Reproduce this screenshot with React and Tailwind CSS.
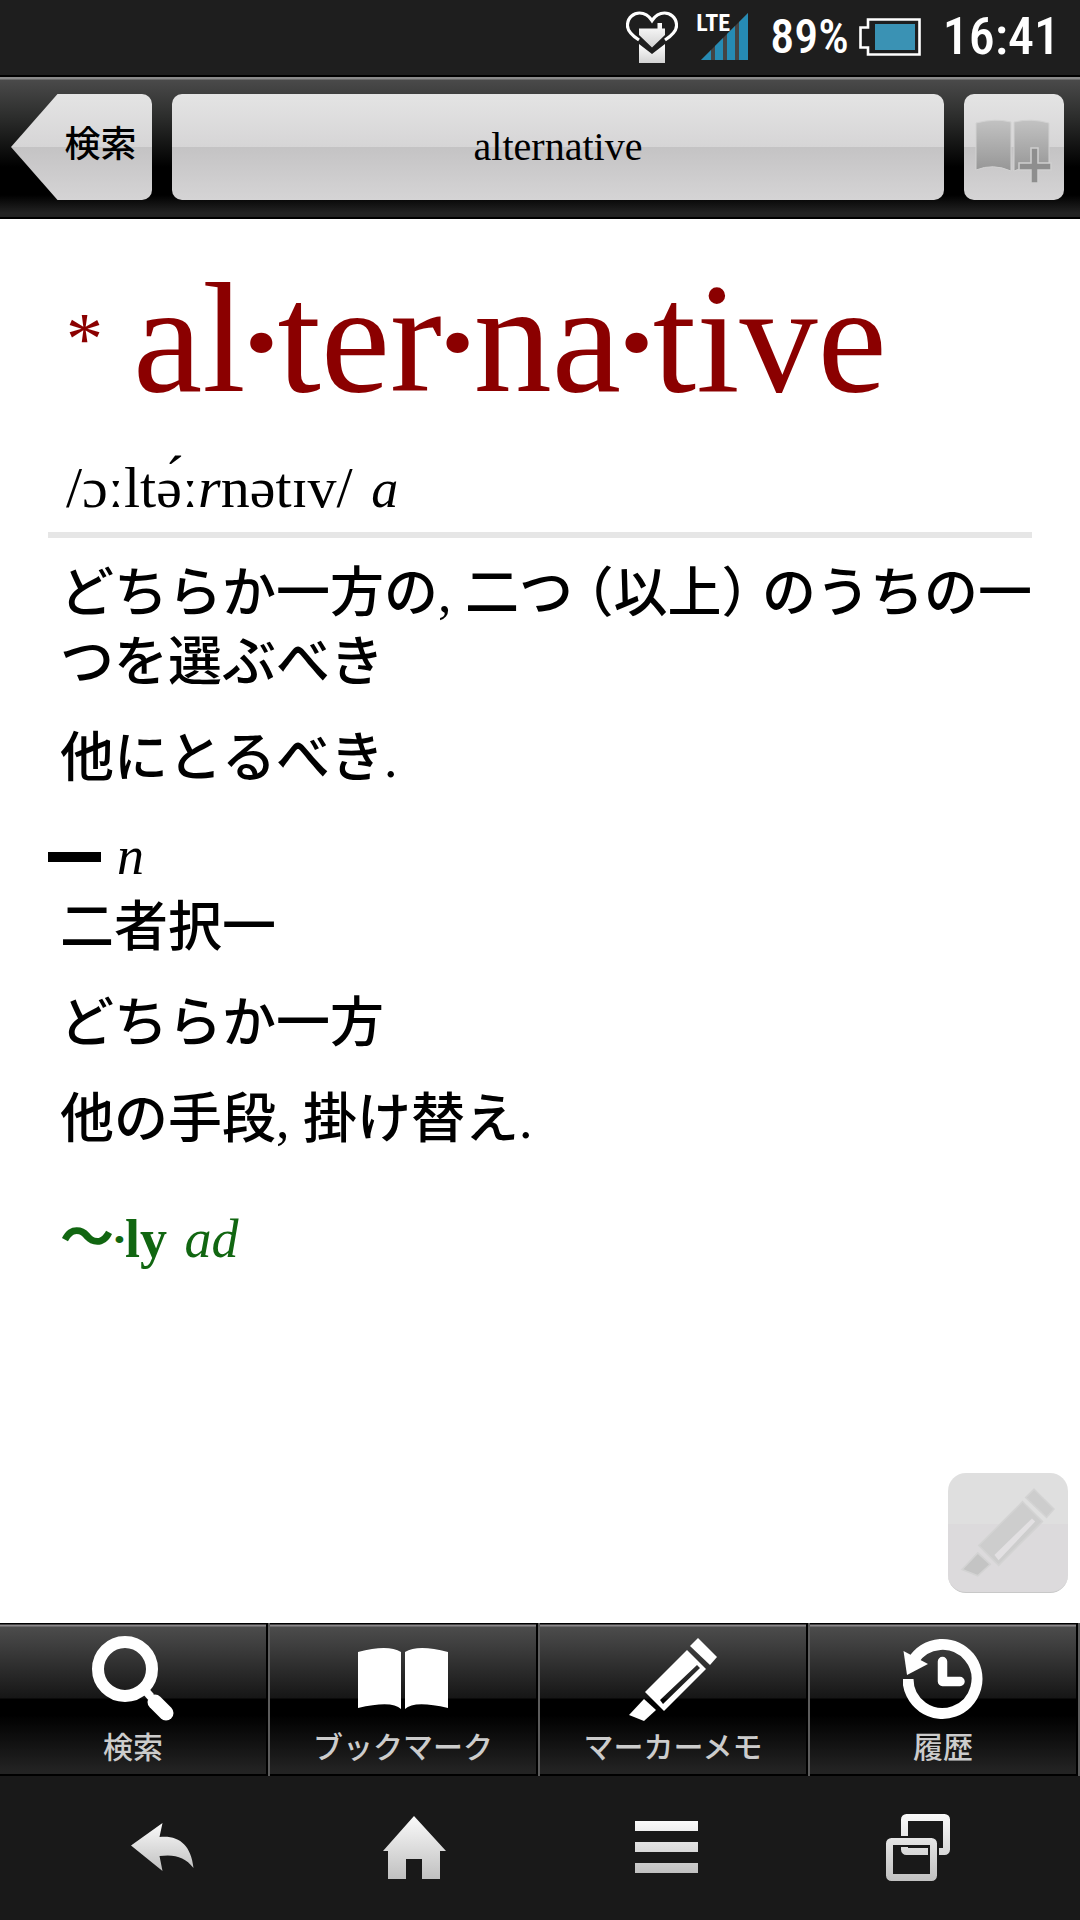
import { useState } from 'react';

const MARKER_CAP = '69,0 88,19 81,27 61,8';
const MARKER_TIP = '15,61 27,72 15,83 0,77';

function HeartIcon() {
  return (
    <svg viewBox="0 0 52 52" className="w-[52px] h-[52px]" aria-hidden="true">
      <defs>
        <linearGradient id="box" x1="0" y1="0" x2="0" y2="1">
          <stop offset="0" stopColor="#fff" />
          <stop offset="1" stopColor="#d2d2d2" />
        </linearGradient>
      </defs>
      <path
        d="M13 29 C4 23 1 18 1.5 13.5 C2 6 8 2 13.5 2 C19 2 23 5 26 9.5 C29 5 33 2 38.5 2 C44 2 50 6 50.5 13.5 C51 18 48 23 39 29"
        fill="none"
        stroke="#fff"
        strokeWidth="3.2"
      />
      <path d="M13 17.5 H31.5 V12 H36 V17.5 H39 V24 L26 36.5 L13 24 Z" fill="url(#box)" />
      <path d="M13 33 L26 43 L39 33 V52 H13 Z" fill="url(#box)" />
    </svg>
  );
}

function SignalIcon() {
  return (
    <svg viewBox="0 0 47 47" className="w-[47px] h-[47px]" aria-hidden="true">
      <path d="M0 47 L47 0 V47 Z" fill="#444" />
      <path d="M0 47 L10 37 V47 Z M14 47 V33 L22 25 V47 Z M26 47 V21 L34 13 V47 Z M38 47 V9 L47 0 V47 Z" fill="#268bb4" />
    </svg>
  );
}

function BatteryIcon() {
  return (
    <svg viewBox="0 0 62 38" className="w-[62px] h-[38px]" aria-hidden="true">
      <path d="M9 1.5 H60.5 V36.5 H9 V29.5 H1.5 V9.5 H9 Z" fill="none" stroke="#fff" strokeWidth="2.6" />
      <rect x="16" y="6" width="40" height="26" fill="#3a92b4" />
    </svg>
  );
}

function BookAddIcon() {
  return (
    <svg viewBox="0 0 78 66" className="w-[78px] h-[66px]" aria-hidden="true">
      <defs>
        <linearGradient id="page" x1="0" y1="0" x2="0" y2="1">
          <stop offset="0" stopColor="#c2c2c2" />
          <stop offset="1" stopColor="#969696" />
        </linearGradient>
      </defs>
      <g fill="url(#page)" stroke="#d2d2d2">
        <path d="M1 5 Q20 0 36 4 V53 Q18 45 1 52 Z" />
        <path d="M39 4 Q56 0 74 5 V52 Q56 45 39 53 Z" />
      </g>
      <path d="M56 30 H63 V45 H76 V52 H63 V65 H56 V52 H44 V45 H56 Z" fill="#8e8e8e" stroke="#cfcfcf" strokeWidth="1.5" />
    </svg>
  );
}

function SearchIcon() {
  return (
    <svg viewBox="0 0 84 86" className="w-[84px] h-[86px]" aria-hidden="true">
      <g fill="none" stroke="#fff">
        <circle cx="34" cy="33" r="27" strokeWidth="12" />
        <path d="M53 53 L60 61" strokeWidth="8" />
        <path d="M64 66 L75 77" strokeWidth="15" strokeLinecap="round" />
      </g>
    </svg>
  );
}

function BookIcon() {
  return (
    <svg viewBox="0 0 90 62" className="w-[90px] h-[62px]" aria-hidden="true">
      <path d="M0 4 Q30 -4 43 4 V61 Q34 52 0 60 Z" fill="#fff" />
      <path d="M47 4 Q60 -4 90 4 V60 Q56 52 47 61 Z" fill="#fff" />
    </svg>
  );
}

function MarkerIcon() {
  return (
    <svg viewBox="0 0 88 83" className="w-[88px] h-[83px]" aria-hidden="true">
      <g fill="#fff">
        <polygon points={MARKER_CAP} />
        <path fillRule="evenodd" d="M58 12 L77 31 L35 73 L16 54 Z M68 27 L71 30 L34 66 L31 62 Z" />
        <polygon points={MARKER_TIP} />
      </g>
    </svg>
  );
}

function MarkerGhostIcon() {
  return (
    <svg viewBox="-2 -2 92 87" className="w-[96px] h-[91px]" aria-hidden="true">
      <g fill="#cdcdcd" stroke="#d3d3d3" strokeWidth="1.5">
        <polygon points={MARKER_CAP} />
        <path d="M58 12 L77 31 L35 73 L16 54 Z" />
        <polygon points={MARKER_TIP} fill="#c4c4c4" />
      </g>
      <polygon points="67,28 70,31 35,68 31,63" fill="#e2e0e2" />
    </svg>
  );
}

function HistoryIcon() {
  return (
    <svg viewBox="0 0 81 82" className="w-[81px] h-[82px]" aria-hidden="true">
      <path d="M5 41 A34.5 34.5 0 1 0 10 23" fill="none" stroke="#fff" strokeWidth="11" />
      <polygon points="0.5,13 25,26 4,37" fill="#fff" />
      <path d="M39.5 23.5 V43.5 H57" fill="none" stroke="#fff" strokeWidth="9.5" strokeLinecap="round" strokeLinejoin="round" />
    </svg>
  );
}

function NavGradient({ id, height }) {
  return (
    <defs>
      <linearGradient id={id} gradientUnits="userSpaceOnUse" x1="0" y1="0" x2="0" y2={height}>
        <stop offset="0" stopColor="#fafafa" />
        <stop offset="1" stopColor="#c0c0c0" />
      </linearGradient>
    </defs>
  );
}

function BackIcon() {
  return (
    <svg viewBox="0 0 63 48" className="w-[63px] h-[48px]" aria-hidden="true">
      <NavGradient id="nav-back" height="48" />
      <path d="M0 22.5 L31.5 0 L28.5 14 C48 12 60 22 62.5 45 C54 34 44 31 28.5 33 L31.5 48 Z" fill="url(#nav-back)" />
    </svg>
  );
}

function HomeIcon() {
  return (
    <svg viewBox="0 0 63 63" className="w-[63px] h-[63px]" aria-hidden="true">
      <NavGradient id="nav-home" height="63" />
      <path d="M31 0 L63 35 H57 V63 H39 V43 H23 V63 H5 V35 H0 Z" fill="url(#nav-home)" />
    </svg>
  );
}

function MenuIcon() {
  return (
    <svg viewBox="0 0 63 52" className="w-[63px] h-[52px]" aria-hidden="true">
      <NavGradient id="nav-menu" height="52" />
      <path d="M0 0 H63 V10 H0 Z M0 21 H63 V31 H0 Z M0 42 H63 V52 H0 Z" fill="url(#nav-menu)" />
    </svg>
  );
}

function RecentsIcon() {
  return (
    <svg viewBox="0 0 64 67" className="w-[64px] h-[67px]" aria-hidden="true">
      <NavGradient id="nav-recents" height="67" />
      <g fill="none" strokeWidth="7">
        <rect x="18.5" y="3.5" width="42" height="34" rx="2" stroke="url(#nav-recents)" />
        <rect x="3.5" y="27.5" width="44" height="36" rx="2" stroke="#191919" strokeWidth="11" />
        <rect x="3.5" y="27.5" width="44" height="36" rx="2" stroke="url(#nav-recents)" />
      </g>
    </svg>
  );
}

const tabs = [
  { id: 'search', label: '検索', icon: SearchIcon },
  { id: 'bookmark', label: 'ブックマーク', icon: BookIcon },
  { id: 'marker', label: 'マーカーメモ', icon: MarkerIcon },
  { id: 'history', label: '履歴', icon: HistoryIcon },
];

const navKeys = [
  { label: '戻る', icon: BackIcon },
  { label: 'ホーム', icon: HomeIcon },
  { label: 'メニュー', icon: MenuIcon },
  { label: '履歴一覧', icon: RecentsIcon },
];

const glossy = 'bg-[linear-gradient(#e4e4e4,#d6d5d6_50%,#c4c3c4_50%,#d5d4d5)]';

function StatusBar() {
  return (
    <div className="flex items-center justify-end h-[75px] pr-5 pb-[2px] bg-[#1e1e1e] text-white font-['Liberation_Sans_Narrow','Roboto_Condensed','Noto_Sans',sans-serif] font-medium">
      <HeartIcon />
      <div className="relative ml-[23px]">
        <SignalIcon />
        <span className="absolute -left-[5px] -top-[2px] text-[24px] leading-6 font-bold">LTE</span>
      </div>
      <span className="ml-[22px] text-[48px] leading-none">89%</span>
      <span className="ml-[10px]">
        <BatteryIcon />
      </span>
      <span className="ml-[22px] text-[52px] leading-none">16:41</span>
    </div>
  );
}

function Header() {
  return (
    <header className="flex items-center gap-5 h-[144px] pl-[11px] pr-4 border-y-2 border-black bg-[linear-gradient(#8a8a8a_2px,#4a4a4a_3px,#2c2d2c_40px,#000_90px,#000_118px,#232323_136px)]">
      <button className={`w-[141px] h-[106px] pl-[38px] pb-3 rounded-r-[10px] ${glossy} text-[36px] font-medium text-black [clip-path:polygon(0_50%,33%_0,100%_0,100%_100%,33%_100%)]`}>
        検索
      </button>
      <button className={`flex-1 h-[106px] rounded-[10px] ${glossy} font-['Liberation_Serif',serif] text-[40px] text-black`}>
        alternative
      </button>
      <button aria-label="ブックマークに追加" className={`flex items-center justify-center w-[100px] h-[106px] pt-2 rounded-[10px] ${glossy}`}>
        <BookAddIcon />
      </button>
    </header>
  );
}

// Syllable break mark inside a headword
function Dot() {
  return <span className="-mx-[0.03em] align-[0.06em] font-['Roboto',sans-serif] text-[0.78em] leading-none font-black">·</span>;
}

function Entry() {
  return (
    <article className="px-12 pt-[30px] text-[54px] leading-[69px] font-medium font-['Liberation_Serif','Noto_Sans_CJK_JP',serif]">
      <h1 className="flex items-start gap-[30px] pl-[18px] font-normal text-[#8b0000] text-[156px] leading-[180px]">
        <span className="text-[74px] leading-[180px]">*</span>
        <span>al<Dot />ter<Dot />na<Dot />tive</span>
      </h1>
      <p className="pl-[18px] pt-[18px] pb-[2px] text-[58px] leading-[81px]">
        /ɔːltə́ː<i>r</i>nətɪv/ <i className="ml-1 text-[54px]">a</i>
      </p>
      <hr className="border-t-[6px] border-[#e6e6e6]" />
      <div className="flex flex-col gap-[27px] pl-3 pt-[22px]">
        <p>
          どちらか一方の, 二つ <span className="[font-feature-settings:'halt']">（以上）</span> のうちの一つを選ぶべき
        </p>
        <p>他にとるべき.</p>
      </div>
      <h2 className="flex items-center gap-4 pt-7 pb-[3px]">
        <span className="w-[53px] h-[10px] bg-black" />
        <i className="font-normal">n</i>
      </h2>
      <div className="flex flex-col gap-[27px] pl-3">
        <p>二者択一</p>
        <p>どちらか一方</p>
        <p>他の手段, 掛け替え.</p>
      </div>
      <p className="pl-3 pt-[50px] text-[#116611]">
        <b>〜<Dot />ly</b> <i className="ml-1">ad</i>
      </p>
    </article>
  );
}

export default function App() {
  const [active, setActive] = useState('search');

  return (
    <div className="flex flex-col min-h-screen bg-white text-black font-['Noto_Sans_CJK_JP',sans-serif]" lang="ja">
      <StatusBar />
      <Header />

      <main className="relative flex-1">
        <Entry />
        <button
          aria-label="マーカー"
          className="absolute right-3 bottom-[30px] flex items-center justify-center w-[120px] h-[120px] rounded-[18px] border-b border-[#c8c8c8] bg-[linear-gradient(#dfdfdf_43%,#dcdadc_43%)]"
        >
          <MarkerGhostIcon />
        </button>
      </main>

      {/* Toolbar */}
      <nav className="grid grid-cols-4 h-[153px]">
        {tabs.map(({ id, label, icon: Icon }) => (
          <button
            key={id}
            onClick={() => setActive(id)}
            aria-pressed={active === id}
            className="flex flex-col items-center border-r-2 border-[#5c5c5c] pr-[2px] text-[#ccc] shadow-[inset_-2px_0_#000,inset_0_-2px_#000] bg-[linear-gradient(#000_1px,#8a8789_2px,#8a8789_3px,#4c4c4c_4px,#161616_75px,#000_76px,#000_92px,#232323_148px)]"
          >
            <span className="flex items-center justify-center h-[112px]">
              <Icon />
            </span>
            <span className="-mt-2 text-[30px] leading-9 font-medium">{label}</span>
          </button>
        ))}
      </nav>

      {/* System navigation keys */}
      <nav className="grid grid-cols-4 items-center h-[144px] px-9 pb-[2px] bg-[#191919]">
        {navKeys.map(({ label, icon: Icon }) => (
          <button key={label} aria-label={label} className="flex justify-center">
            <Icon />
          </button>
        ))}
      </nav>
    </div>
  );
}
